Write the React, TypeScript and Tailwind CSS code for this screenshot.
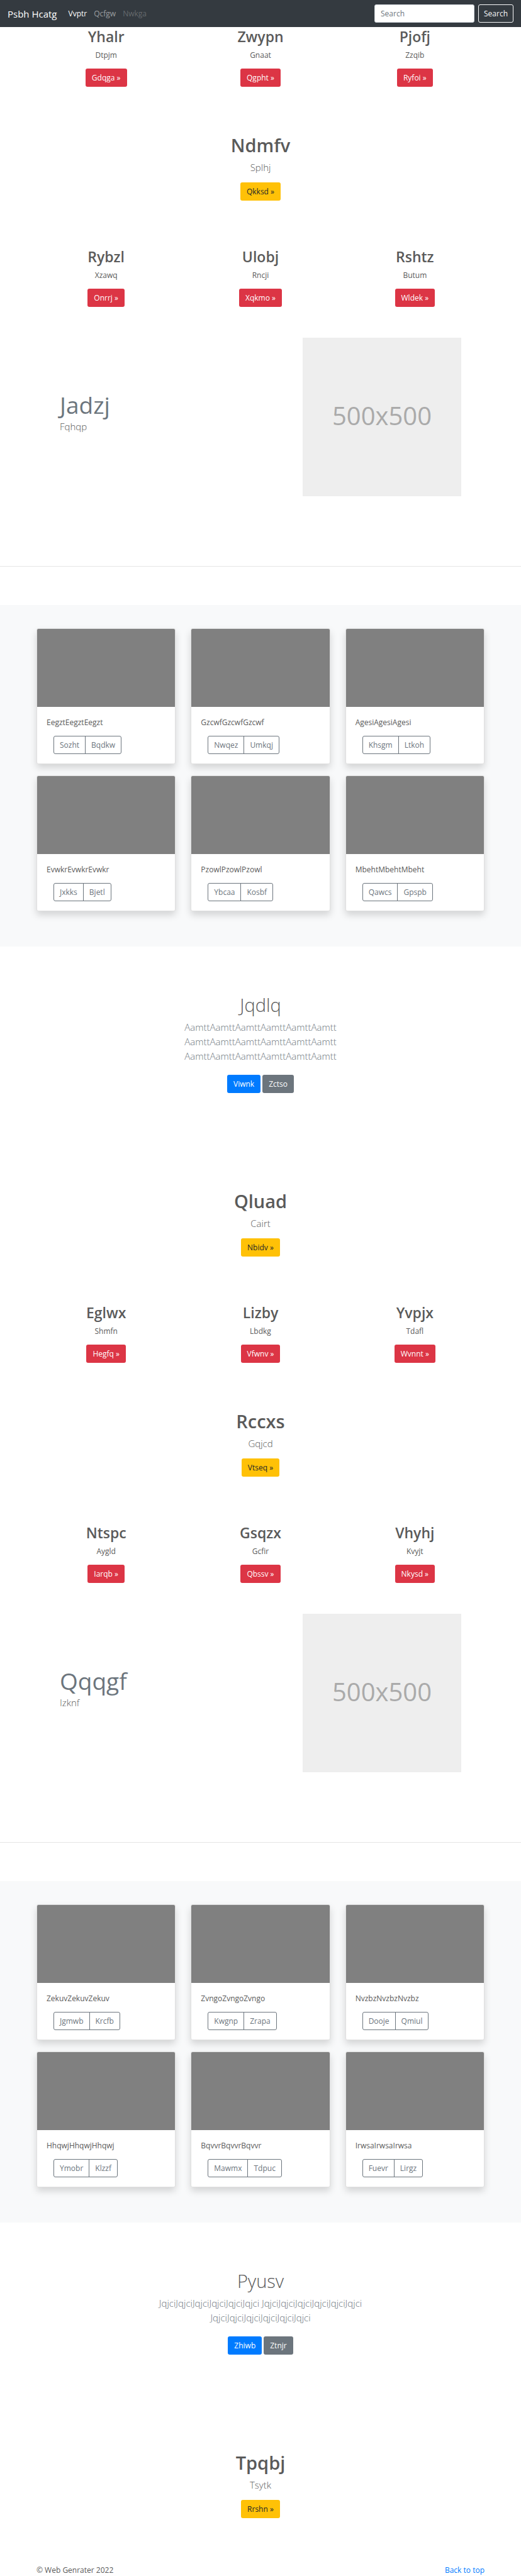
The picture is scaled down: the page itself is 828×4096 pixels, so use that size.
import React from "react";

type Feature = { title: string; text: string; action: string };
type CardItem = { text: string; first: string; second: string };

const topFeatures: Feature[] = [
  { title: "Yhalr", text: "Dtpjm", action: "Gdqga" },
  { title: "Zwypn", text: "Gnaat", action: "Qgpht" },
  { title: "Pjofj", text: "Zzqib", action: "Ryfoi" },
];

const secondFeatures: Feature[] = [
  { title: "Rybzl", text: "Xzawq", action: "Onrrj" },
  { title: "Ulobj", text: "Rncji", action: "Xqkmo" },
  { title: "Rshtz", text: "Butum", action: "Wldek" },
];

const thirdFeatures: Feature[] = [
  { title: "Eglwx", text: "Shmfn", action: "Hegfq" },
  { title: "Lizby", text: "Lbdkg", action: "Vfwnv" },
  { title: "Yvpjx", text: "Tdafl", action: "Wvnnt" },
];

const fourthFeatures: Feature[] = [
  { title: "Ntspc", text: "Aygld", action: "Iarqb" },
  { title: "Gsqzx", text: "Gcfir", action: "Qbssv" },
  { title: "Vhyhj", text: "Kvyjt", action: "Nkysd" },
];

const firstAlbum: CardItem[] = [
  { text: "EegztEegztEegzt", first: "Sozht", second: "Bqdkw" },
  { text: "GzcwfGzcwfGzcwf", first: "Nwqez", second: "Umkqj" },
  { text: "AgesiAgesiAgesi", first: "Khsgm", second: "Ltkoh" },
  { text: "EvwkrEvwkrEvwkr", first: "Jxkks", second: "Bjetl" },
  { text: "PzowlPzowlPzowl", first: "Ybcaa", second: "Kosbf" },
  { text: "MbehtMbehtMbeht", first: "Qawcs", second: "Gpspb" },
];

const secondAlbum: CardItem[] = [
  { text: "ZekuvZekuvZekuv", first: "Jgmwb", second: "Krcfb" },
  { text: "ZvngoZvngoZvngo", first: "Kwgnp", second: "Zrapa" },
  { text: "NvzbzNvzbzNvzbz", first: "Dooje", second: "Qmiul" },
  { text: "HhqwjHhqwjHhqwj", first: "Ymobr", second: "Klzzf" },
  { text: "BqvvrBqvvrBqvvr", first: "Mawmx", second: "Tdpuc" },
  { text: "IrwsaIrwsaIrwsa", first: "Fuevr", second: "Lirgz" },
];

const container = "mx-auto w-full max-w-[736px] px-3";
const button = "inline-flex h-[29px] items-center rounded-[3px] px-[10px]";

function Navbar() {
  return (
    <header className="flex h-[43px] items-center bg-[#343a40] px-3">
      <a href="#" className="mr-[18px] text-[15px] text-white">
        Psbh Hcatg
      </a>
      <nav className="flex flex-1 gap-[11px]">
        <a href="#" className="text-white">
          Vvptr
        </a>
        <a href="#" className="text-white/50">
          Qcfgw
        </a>
        <a href="#" aria-disabled="true" className="text-white/25">
          Nwkga
        </a>
      </nav>
      <form className="flex gap-[6px]" onSubmit={(e) => e.preventDefault()}>
        <input
          type="text"
          placeholder="Search"
          aria-label="Search"
          className="h-[29px] w-[159px] rounded-[3px] border border-[#ced4da] bg-white px-[9px] text-[#495057] placeholder:text-[#6c757d]"
        />
        <button
          type="submit"
          className="h-[29px] rounded-[3px] border border-[#f8f9fa] px-2 text-[#f8f9fa]"
        >
          Search
        </button>
      </form>
    </header>
  );
}

function FeatureRow({ items }: { items: Feature[] }) {
  return (
    <section className={container}>
      <div className="grid grid-cols-3 gap-6">
        {items.map((item) => (
          <div key={item.title} className="flex flex-col items-center">
            <h2 className="mb-[6px] text-[23px] leading-[30px] font-semibold">{item.title}</h2>
            <p className="mb-3">{item.text}</p>
            <a href="#" className={`${button} bg-[#dc3545] text-white`}>
              {item.action} »
            </a>
          </div>
        ))}
      </div>
    </section>
  );
}

function Hero({ title, text, action }: Feature) {
  return (
    <section className={`${container} flex flex-col items-center`}>
      <h1 className="mb-[6px] text-[29px] leading-[37px] font-semibold">{title}</h1>
      <p className="mb-3 text-[15px] leading-[23px] font-light">{text}</p>
      <a href="#" className={`${button} bg-[#ffc107] text-[#212529]`}>
        {action} »
      </a>
    </section>
  );
}

function Featurette({ title, text }: { title: string; text: string }) {
  return (
    <>
      <section className={container}>
        <div className="flex items-center justify-between px-[37px]">
          <div className="pb-4">
            <h2 className="text-[37px] leading-[46px] text-[#6c757d]">{title}</h2>
            <p className="text-[15px] leading-[23px] font-light">{text}</p>
          </div>
          <div
            role="img"
            aria-label="500x500"
            className="flex size-[252px] items-center justify-center bg-[#eeeeee] pb-1 text-[40px] font-medium text-[#aaaaaa]"
          >
            500x500
          </div>
        </div>
      </section>
      <hr className="mt-[111px] mb-[61px] border-[#e5e5e5]" />
    </>
  );
}

function Album({ items }: { items: CardItem[] }) {
  const outline = "h-[29px] border border-[#6c757d] px-[9px] text-[#6c757d]";
  return (
    <section className="bg-[#f8f9fa] pt-[37px] pb-[56px]">
      <div className={container}>
        <div className="grid grid-cols-3 gap-x-6 gap-y-[18px]">
          {items.map((item) => (
            <article
              key={item.text}
              className="overflow-hidden rounded-[3px] border border-[#dfdfdf] bg-white shadow-[0_6px_12px_rgba(0,0,0,0.15)]"
            >
              <div className="h-[124px] bg-[#808080]" />
              <div className="px-[15px] pt-4 pb-[15px]">
                <p className="mb-3">{item.text}</p>
                <div className="flex pl-[11px]">
                  <button type="button" className={`${outline} rounded-l-[3px]`}>
                    {item.first}
                  </button>
                  <button type="button" className={`${outline} -ml-px rounded-r-[3px]`}>
                    {item.second}
                  </button>
                </div>
              </div>
            </article>
          ))}
        </div>
      </div>
    </section>
  );
}

function Jumbotron(props: {
  title: string;
  text: string;
  primary: string;
  secondary: string;
}) {
  return (
    <section className="mx-auto flex max-w-[422px] flex-col items-center pt-[74px] text-center">
      <h1 className="mb-[6px] text-[29px] leading-[37px] font-light">{props.title}</h1>
      <p className="mb-[18px] text-[15px] leading-[23px] font-light text-[#6c757d]">{props.text}</p>
      <div className="flex gap-[3px]">
        <a href="#" className={`${button} bg-[#007bff] text-white`}>
          {props.primary}
        </a>
        <a href="#" className={`${button} bg-[#6c757d] text-white`}>
          {props.secondary}
        </a>
      </div>
    </section>
  );
}

export default function App() {
  return (
    <div className="bg-white font-['Open_Sans','Noto_Sans',sans-serif] text-[12px] leading-[18px] text-[#5a5a5a]">
      <Navbar />
      <main>
        <div className="flex flex-col gap-[74px]">
          <FeatureRow items={topFeatures} />
          <Hero title="Ndmfv" text="Splhj" action="Qkksd" />
          <FeatureRow items={secondFeatures} />
        </div>
        <div className="mt-[49px]">
          <Featurette title="Jadzj" text="Fqhqp" />
          <Album items={firstAlbum} />
          <Jumbotron
            title="Jqdlq"
            text="AamttAamttAamttAamttAamttAamtt AamttAamttAamttAamttAamttAamtt AamttAamttAamttAamttAamttAamtt"
            primary="Viwnk"
            secondary="Zctso"
          />
        </div>
        <div className="mt-[153px] flex flex-col gap-[74px]">
          <Hero title="Qluad" text="Cairt" action="Nbidv" />
          <FeatureRow items={thirdFeatures} />
          <Hero title="Rccxs" text="Gqjcd" action="Vtseq" />
          <FeatureRow items={fourthFeatures} />
        </div>
        <div className="mt-[49px]">
          <Featurette title="Qqqgf" text="Izknf" />
          <Album items={secondAlbum} />
          <Jumbotron
            title="Pyusv"
            text="JqjciJqjciJqjciJqjciJqjciJqjci JqjciJqjciJqjciJqjciJqjciJqjci JqjciJqjciJqjciJqjciJqjciJqjci"
            primary="Zhiwb"
            secondary="Ztnjr"
          />
        </div>
        <div className="mt-[153px]">
          <Hero title="Tpqbj" text="Tsytk" action="Rrshn" />
        </div>
      </main>
      <footer className={`${container} mt-[74px] flex justify-between`}>
        <p>© Web Genrater 2022</p>
        <a href="#" className="text-[#007bff]">
          Back to top
        </a>
      </footer>
    </div>
  );
}
